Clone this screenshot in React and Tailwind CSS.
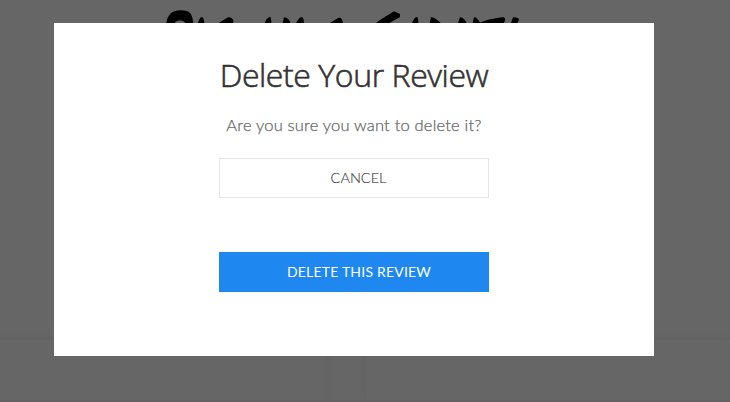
function BrushMark() {
  return (
    <svg className="absolute left-0 top-0" width="730" height="30" viewBox="0 0 730 30" fill="#000" aria-hidden="true">
      <path d="M166 26C167 15 171 10.300 181 10.300C190 10.300 193 14 193.500 26H186C186 18.800 174 18.800 174 26Z" />
      <path d="M197 26C199 20 200 17 202 17C204 18 204 21 205 26Z" />
      <path d="M214 26L228 17.300C230 16.600 233 18.500 233.500 21L232 26Z" />
      <path d="M264 26C265 20 268 17 270 17C271.500 18 271 21 272 26Z" />
      <path d="M282 26L284 17.300C286 17 291 20 291 26Z" />
      <path d="M295 26C297 20 300 17 302 17C304.500 19 304 22 303 26Z" />
      <path d="M325 26L338 18C341 17 343 19 343 26Z" />
      <path d="M372 26L380 20L394 11.200L400 14V17L384 26Z" />
      <path d="M411 26C413 20 415 17 417 17C418.500 18 418 22 419 26Z" />
      <path d="M429 26L431 17.300C433 17 439 20 443 26Z" />
      <path d="M457 26L460 17.300C463 17 466 21 468 26Z" />
      <path d="M472 26L474 17.300C477 17 479 21 482 26Z" />
      <path d="M478 24C484 20 496 18 503 17.300C506 18 506 20 502 26H480Z" />
      <path d="M510 26L513 17.300C516 17 519 18 519 20L516 26Z" />
    </svg>
  );
}

export default function App() {
  return (
    <div className="relative flex h-[402px] w-[730px] flex-col overflow-hidden bg-[#666] pl-[54px] pt-[23px]">
      <div className="absolute inset-x-0 bottom-0 flex h-[62px] gap-10">
        <div className="w-[326px] shrink-0 bg-[#666] shadow-[0_0_8px_rgba(0,0,0,0.06)]" />
        <div className="grow bg-[#666] shadow-[0_0_8px_rgba(0,0,0,0.06)]" />
      </div>
      <div className="absolute inset-x-0 bottom-0 h-px bg-[#625f60]" />
      <BrushMark />
      <section
        role="dialog"
        className="relative flex h-[333px] w-[600px] flex-col items-center bg-white pt-[32px] font-['Lato',sans-serif]"
      >
        <h1 className="h-10 whitespace-nowrap font-['Open_Sans',sans-serif] text-[32px] font-light leading-10 tracking-[-0.42px] text-[#333] [-webkit-text-stroke:0.6px_#333]">
          Delete Your Review
        </h1>
        <p className="mt-[18px] h-6 whitespace-nowrap text-[16.5px] font-light leading-6 tracking-[0.2px] text-[#666] [-webkit-text-stroke:0.25px_#666]">
          Are you sure you want to delete it?
        </p>
        <button className="mt-[21px] h-10 w-[270px] border border-[#e5e5e5] pl-[9px] text-[14.5px] font-light leading-[38px] text-[#444] [-webkit-text-stroke:0.15px_#444]">
          CANCEL
        </button>
        <button className="mt-[54px] h-10 w-[270px] bg-[#1e87f0] pl-[10px] text-[14px] leading-10 tracking-[0.2px] text-white">
          DELETE THIS REVIEW
        </button>
      </section>
    </div>
  );
}
